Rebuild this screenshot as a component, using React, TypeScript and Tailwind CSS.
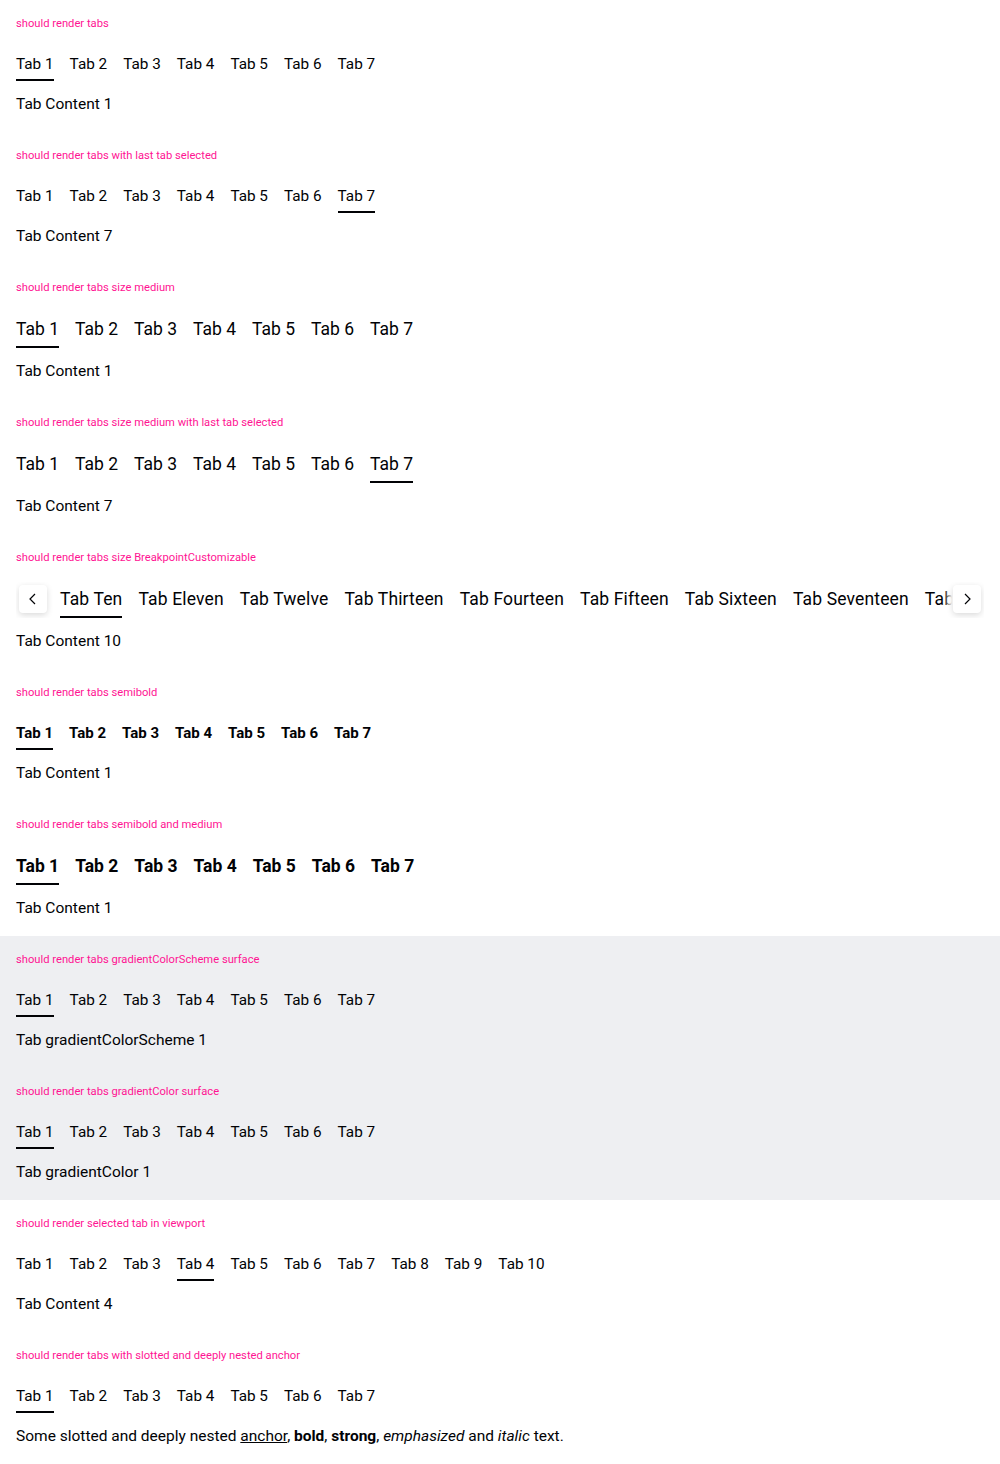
import React from "react";

const font = "font-['Roboto',sans-serif]";

const seven = ["Tab 1", "Tab 2", "Tab 3", "Tab 4", "Tab 5", "Tab 6", "Tab 7"];
const ten = [...seven, "Tab 8", "Tab 9", "Tab 10"];
const long = [
  "Tab Ten",
  "Tab Eleven",
  "Tab Twelve",
  "Tab Thirteen",
  "Tab Fourteen",
  "Tab Fifteen",
  "Tab Sixteen",
  "Tab Seventeen",
  "Tab Eighteen",
  "Tab Nineteen",
];

interface TabsBarProps {
  tabs: string[];
  active: number;
  medium?: boolean;
  semibold?: boolean;
  wide?: boolean;
}

const TabsBar = ({ tabs, active, medium, semibold, wide }: TabsBarProps) => (
  <div className="flex gap-4">
    {tabs.map((t, i) => (
      <div
        key={t}
        className={
          "flex flex-col shrink-0 whitespace-nowrap " +
          (medium ? "pt-[3px] text-[17.5px] leading-[28px]" : "pt-1 leading-[24px]") +
          (!medium && semibold ? " text-[15px]" : "") +
          (!medium && !semibold ? " text-[15.3px]" : "") +
          (wide ? " tracking-[0.15px]" : "") +
          (semibold ? " font-bold" : " font-normal")
        }
      >
        <span>{t}</span>
        <div className={"mt-[3px] h-[2px] " + (i === active ? "bg-[#010205]" : "bg-transparent")} />
      </div>
    ))}
  </div>
);

interface SectionProps {
  label: string;
  children: React.ReactNode;
  content: React.ReactNode;
  gray?: boolean;
}

const Section = ({ label, children, content, gray }: SectionProps) => (
  <div className={"px-4 pt-4 pb-4 " + (gray ? "bg-[#eeeff2]" : "bg-white")}>
    <div className="text-[11.2px] leading-4 text-[#ff1493]">{label}</div>
    <div className="mt-4">{children}</div>
    <div className="mt-[11px] text-[15.5px] leading-6">{content}</div>
  </div>
);

export default function App() {
  return (
    <div className={"w-[1000px] text-[#010205] " + font}>
      <Section label="should render tabs" content="Tab Content 1">
        <TabsBar tabs={seven} active={0} />
      </Section>
      <Section label="should render tabs with last tab selected" content="Tab Content 7">
        <TabsBar tabs={seven} active={6} />
      </Section>
      <Section label="should render tabs size medium" content="Tab Content 1">
        <TabsBar tabs={seven} active={0} medium />
      </Section>
      <Section label="should render tabs size medium with last tab selected" content="Tab Content 7">
        <TabsBar tabs={seven} active={6} medium />
      </Section>
      <Section label="should render tabs size BreakpointCustomizable" content="Tab Content 10">
        <div className="relative overflow-hidden">
          <div className="pl-11">
            <TabsBar tabs={long} active={0} medium wide />
          </div>
          {/* prev / next scroll buttons */}
          <div className="absolute left-0 top-0 flex h-[36px] w-[44px] items-start bg-gradient-to-r from-white from-70% to-transparent">
            <button className="ml-[3px] mt-[3px] flex h-7 w-7 items-center justify-center rounded bg-white shadow-[0_2px_6px_rgba(0,0,0,0.15)]">
              <svg width="16" height="16" viewBox="0 0 16 16" fill="none" stroke="#010205" strokeWidth="1.2">
                <path d="M10 3 L5 8 L10 13" />
              </svg>
            </button>
          </div>
          <div className="absolute right-0 top-0 flex h-[36px] w-[40px] items-start justify-end bg-gradient-to-l from-white from-80% to-transparent pr-[3px]">
            <button className="mt-[3px] flex h-7 w-7 items-center justify-center rounded bg-white shadow-[0_2px_6px_rgba(0,0,0,0.15)]">
              <svg width="16" height="16" viewBox="0 0 16 16" fill="none" stroke="#010205" strokeWidth="1.2">
                <path d="M6 3 L11 8 L6 13" />
              </svg>
            </button>
          </div>
        </div>
      </Section>
      <Section label="should render tabs semibold" content="Tab Content 1">
        <TabsBar tabs={seven} active={0} semibold />
      </Section>
      <Section label="should render tabs semibold and medium" content="Tab Content 1">
        <TabsBar tabs={seven} active={0} medium semibold />
      </Section>
      <Section label="should render tabs gradientColorScheme surface" content="Tab gradientColorScheme 1" gray>
        <TabsBar tabs={seven} active={0} />
      </Section>
      <Section label="should render tabs gradientColor surface" content="Tab gradientColor 1" gray>
        <TabsBar tabs={seven} active={0} />
      </Section>
      <Section label="should render selected tab in viewport" content="Tab Content 4">
        <TabsBar tabs={ten} active={3} />
      </Section>
      <Section
        label="should render tabs with slotted and deeply nested anchor"
        content={
          <>
            Some slotted and deeply nested <a className="underline">anchor</a>, <b className="font-bold">bold</b>,{" "}
            <strong className="font-bold">strong</strong>, <em className="italic">emphasized</em> and{" "}
            <i className="italic">italic</i> text.
          </>
        }
      >
        <TabsBar tabs={seven} active={0} />
      </Section>
    </div>
  );
}
